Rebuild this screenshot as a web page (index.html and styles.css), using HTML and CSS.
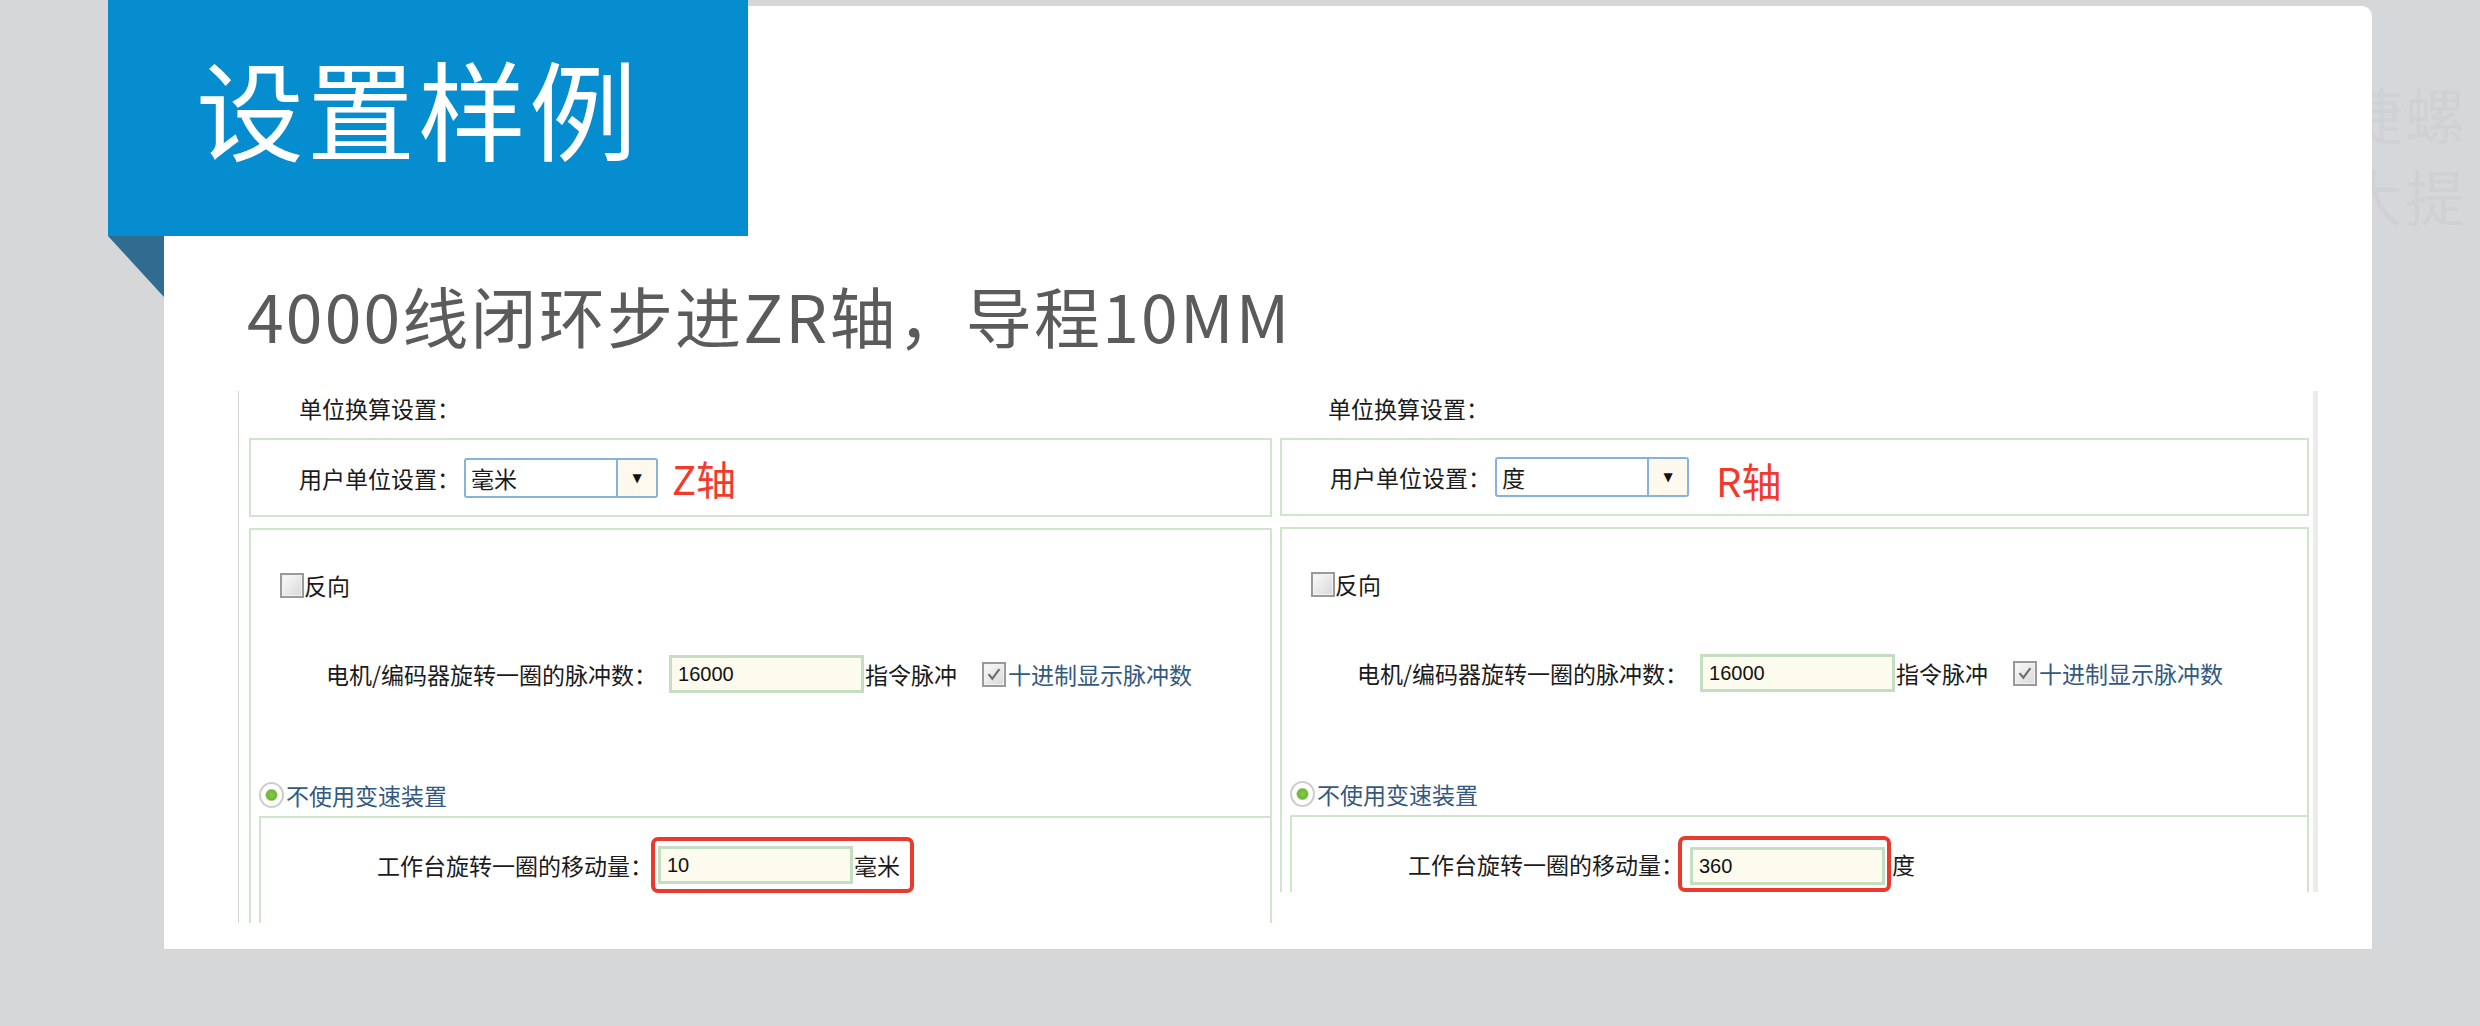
FILE: index.html
```html
<!DOCTYPE html>
<html lang="zh-CN">
<head>
    <meta charset="UTF-8">
    <meta name="viewport" content="width=device-width, initial-scale=1.0">
    <title>设置样例</title>
    <link rel="stylesheet" href="styles.css">
</head>
<body>
    <div class="watermark">捷螺<br>大提</div>

    <div class="ribbon">
        <h1 class="ribbon-title">设置样例</h1>
    </div>
    <div class="ribbon-fold"></div>

    <div class="card">
        <h2 class="subtitle">4000线闭环步进ZR轴，导程10MM</h2>

        <div class="shots">
            <!-- Z axis -->
            <div class="shot shot-left">
                <div class="unit-title">单位换算设置：</div>
                <div class="group group-unit">
                    <span class="label">用户单位设置：</span>
                    <div class="select">
                        <span class="select-value">毫米</span>
                        <span class="select-btn">&#9660;</span>
                    </div>
                    <span class="axis">Z轴</span>
                </div>
                <div class="group group-main">
                    <div class="check-row">
                        <span class="checkbox"></span><span class="label">反向</span>
                    </div>
                    <div class="motor-row">
                        <span class="label">电机/编码器旋转一圈的脉冲数：</span>
                        <span class="input">16000</span>
                        <span class="label">指令脉冲</span>
                        <span class="checkbox checked">
                            <svg viewBox="0 0 24 24" width="24" height="24"><path d="M5.5 11.5 L10 17 L18.5 5.5" fill="none" stroke="#6f6f6f" stroke-width="2.6"/></svg>
                        </span>
                        <span class="link">十进制显示脉冲数</span>
                    </div>
                    <div class="radio-row">
                        <span class="radio"></span><span class="link">不使用变速装置</span>
                    </div>
                    <div class="inner">
                        <div class="work-row">
                            <span class="label">工作台旋转一圈的移动量：</span>
                            <div class="mark mark-wide">
                                <span class="input">10</span>
                                <span class="label">毫米</span>
                            </div>
                        </div>
                    </div>
                </div>
            </div>

            <!-- R axis -->
            <div class="shot shot-right">
                <div class="unit-title">单位换算设置：</div>
                <div class="group group-unit">
                    <span class="label">用户单位设置：</span>
                    <div class="select">
                        <span class="select-value">度</span>
                        <span class="select-btn">&#9660;</span>
                    </div>
                    <span class="axis">R轴</span>
                </div>
                <div class="group group-main">
                    <div class="check-row">
                        <span class="checkbox"></span><span class="label">反向</span>
                    </div>
                    <div class="motor-row">
                        <span class="label">电机/编码器旋转一圈的脉冲数：</span>
                        <span class="input">16000</span>
                        <span class="label">指令脉冲</span>
                        <span class="checkbox checked">
                            <svg viewBox="0 0 24 24" width="24" height="24"><path d="M5.5 11.5 L10 17 L18.5 5.5" fill="none" stroke="#6f6f6f" stroke-width="2.6"/></svg>
                        </span>
                        <span class="link">十进制显示脉冲数</span>
                    </div>
                    <div class="radio-row">
                        <span class="radio"></span><span class="link">不使用变速装置</span>
                    </div>
                    <div class="inner">
                        <div class="work-row">
                            <span class="label">工作台旋转一圈的移动量：</span>
                            <div class="mark mark-tight">
                                <span class="input">360</span>
                            </div>
                            <span class="label">度</span>
                        </div>
                    </div>
                </div>
            </div>
        </div>
    </div>
</body>
</html>
```

FILE: styles.css
```css
body {
    margin: 0;
    padding: 0;
    width: 2480px;
    height: 1026px;
    overflow: hidden;
    position: relative;
    background-color: #d6d7d9;
    font-family: "Noto Sans CJK SC", "Noto Sans", sans-serif;
}

.watermark {
    position: absolute;
    left: 2343px;
    top: 72px;
    font-size: 60px;
    line-height: 82px;
    letter-spacing: 2px;
    color: #d0d1d3;
    white-space: nowrap;
}

.ribbon {
    position: absolute;
    left: 108px;
    top: 0;
    width: 640px;
    height: 236px;
    background-color: #058dcf;
    z-index: 2;
}
.ribbon-title {
    margin: 0;
    padding-left: 88px;
    font-size: 108px;
    font-weight: 400;
    line-height: 212px;
    letter-spacing: 3px;
    color: #fff;
}
.ribbon-fold {
    position: absolute;
    left: 108px;
    top: 236px;
    width: 56px;
    height: 61px;
    background-color: #2f6c8f;
    clip-path: polygon(0 0, 100% 0, 100% 100%);
    z-index: 2;
}

.card {
    position: relative;
    z-index: 1;
    box-sizing: border-box;
    width: 2208px;
    height: 943px;
    margin: 6px 0 0 164px;
    padding: 275px 0 0 74px;
    background-color: #fff;
    border-radius: 0 10px 0 0;
}

.subtitle {
    margin: 0;
    padding-left: 9px;
    font-size: 66px;
    font-weight: 400;
    line-height: 66px;
    letter-spacing: 2.2px;
    color: #5b5b5b;
}

/* the pasted software screenshots */
.shots {
    display: flex;
    gap: 2px;
    margin-top: 44px;
    height: 532px;
    font-size: 23px;
    color: #1b1b1b;
}
.shot {
    box-sizing: border-box;
    display: flex;
    flex-direction: column;
    overflow: hidden;
}
.shot-left {
    width: 1040px;
    height: 532px;
    border-left: 1px solid #d3d3d3;
    padding: 0 6px 0 10px;
}
.shot-right {
    width: 1038px;
    height: 501px;
    border-right: 5px solid #ececec;
    padding: 0 4px 0 0;
}

.label {
    line-height: 26px;
    white-space: nowrap;
}
.link {
    line-height: 26px;
    color: #34597f;
    white-space: nowrap;
}

.unit-title {
    box-sizing: border-box;
    height: 47px;
    padding: 4px 0 0 50px;
    line-height: 26px;
}
.shot-right .unit-title {
    padding-left: 48px;
}

.group {
    border: 2px solid #d0e6cc;
}
.group-unit {
    box-sizing: border-box;
    height: 79px;
    display: flex;
    align-items: center;
    padding-left: 48px;
}
.select {
    box-sizing: border-box;
    display: flex;
    width: 194px;
    height: 40px;
    margin-left: 4px;
    border: 2px solid #86b3dc;
    border-radius: 3px;
}
.select-value {
    flex: 1;
    padding-left: 5px;
    line-height: 36px;
}
.select-btn {
    width: 38px;
    display: flex;
    align-items: center;
    justify-content: center;
    border-left: 2px solid #86b3dc;
    background-color: #fdf9ef;
    font-family: "DejaVu Sans", sans-serif;
    font-size: 12px;
    color: #111;
}
.axis {
    margin-left: 14px;
    font-size: 40px;
    line-height: 40px;
    color: #f23a2c;
}
.shot-right .axis {
    margin-left: 27px;
    margin-top: 6px;
}

.group-main {
    flex: 1;
    display: flex;
    flex-direction: column;
    margin-top: 11px;
    border-bottom: none;
    padding-top: 42px;
}
.check-row {
    display: flex;
    align-items: center;
    height: 26px;
    margin-left: 29px;
}
.checkbox {
    box-sizing: border-box;
    width: 24px;
    height: 25px;
    border: 2px solid #9a9a9a;
    background: linear-gradient(135deg, #fafafa, #d9d9d9);
    box-shadow: inset 0 0 0 1px #f2f2f2;
}
.checkbox svg {
    display: block;
    width: 20px;
    height: 21px;
}
.motor-row {
    display: flex;
    align-items: center;
    height: 38px;
    margin-top: 57px;
    padding-left: 75px;
}
.motor-row .input {
    margin: 0 1px 0 12px;
}
.motor-row .checked {
    margin: 0 2px 0 25px;
}

.radio-row {
    display: flex;
    align-items: center;
    height: 26px;
    margin: 89px 0 0 8px;
}
.radio {
    box-sizing: border-box;
    width: 25px;
    height: 26px;
    margin-right: 2px;
    border-radius: 50%;
    border: 2px solid #cdcdcd;
    background: radial-gradient(circle, #8acb4a 0, #6fb436 5px, #fff 6.5px);
}

.inner {
    flex: 1;
    margin: 8px 0 0 8px;
    border-top: 2px solid #d0e6cc;
    border-left: 2px solid #d0e6cc;
    padding: 19px 0 0 116px;
}
.work-row {
    display: flex;
    align-items: center;
    height: 56px;
}
.mark {
    box-sizing: border-box;
    display: flex;
    align-items: center;
    height: 56px;
    margin-left: -2px;
    border: 4px solid #ea3a2d;
    border-radius: 7px;
}
.mark-wide {
    padding: 0 10px 0 3px;
}
.mark-tight {
    padding: 4px 1px 0 8px;
    margin-left: -6px;
    margin-right: 1px;
}

.input {
    box-sizing: border-box;
    display: block;
    width: 195px;
    height: 38px;
    padding-left: 6px;
    border: 3px solid #c3dec0;
    background-color: #fdfaee;
    font-family: "Liberation Sans", sans-serif;
    font-size: 20px;
    line-height: 32px;
    color: #111;
}
.mark .input {
    margin-right: 1px;
}
```
